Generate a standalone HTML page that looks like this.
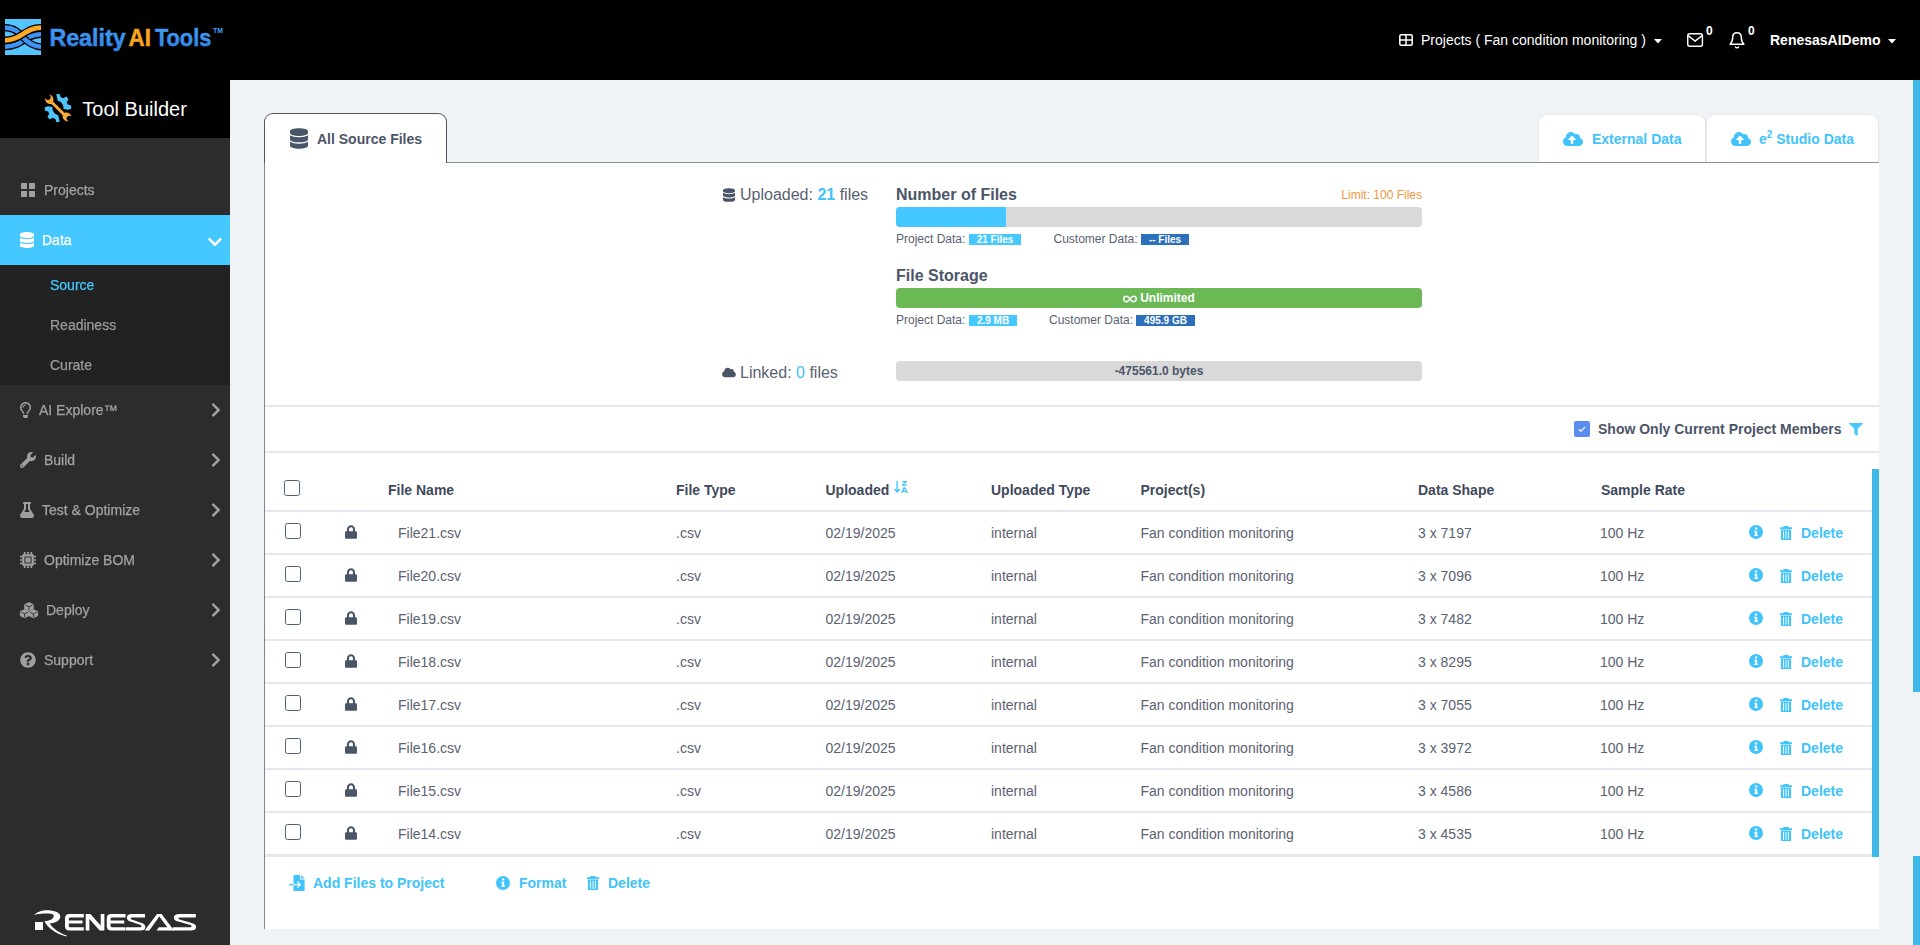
<!DOCTYPE html>
<html lang="en">
<head>
<meta charset="utf-8">
<title>Reality AI Tools - Source Files</title>
<style>
*{box-sizing:border-box;margin:0;padding:0}
html,body{width:1920px;height:945px;overflow:hidden}
body{font-family:"Liberation Sans",sans-serif;font-size:14px;background:#eff3f6;color:#4b5568;position:relative}
.abs{position:absolute}
svg{display:block;overflow:visible}
/* header */
#hdr{position:absolute;left:0;top:0;width:1920px;height:80px;background:#000}
#hdr .t{position:absolute;color:#fff;white-space:nowrap;line-height:16px}
/* sidebar */
#side{position:absolute;left:0;top:80px;width:230px;height:865px;background:#2c2c2c}
#tb{position:absolute;left:0;top:0;width:230px;height:58px;background:#000}
#tb span{position:absolute;left:82.3px;top:16.5px;font-size:20px;line-height:24px;color:#fff;white-space:nowrap}
.mi{position:absolute;left:0;width:230px;height:50px;color:#a3a3a3}
.mi .lbl{-webkit-text-stroke:0.25px currentColor;will-change:transform;position:absolute;top:17px;line-height:16px;font-size:14px;white-space:nowrap}
.mi svg{position:absolute}
.mi.act{background:#45c8ff;color:#fff}
#sub{position:absolute;left:0;top:185px;width:230px;height:120px;background:#222}
#sub div{-webkit-text-stroke:0.25px currentColor;will-change:transform;position:absolute;left:50px;font-size:14px;line-height:16px;color:#9b9b9b}
/* main panel */
#panel{position:absolute;left:264px;top:162px;width:1615px;height:767px;background:#fff;border-left:1px solid #7d8694;border-top:1px solid #8a92a0}
#tab1{z-index:2;position:absolute;left:264px;top:113px;width:183px;height:50px;background:#fff;border:1px solid #51565f;border-bottom:none;border-radius:9px 9px 0 0}
.rtab{position:absolute;top:114px;height:48px;background:#fff;border:1px solid #e3e6ec;border-bottom:none;border-radius:9px 9px 0 0}
.b{font-weight:700}
.tx{position:absolute;white-space:nowrap;line-height:16px}
.lnk{color:#41c3fb;font-weight:700}
.badge{position:absolute;height:11px;line-height:11px;font-size:10px;font-weight:700;color:#fff;text-align:center;white-space:nowrap}
.hl{position:absolute;background:#e4e7ed;height:2px}
.row{position:absolute;left:265px;width:1607px;height:43px;color:#5b6272}
.row .tx{top:13px}
.cb{position:absolute;width:16px;height:16px;border:1px solid #506078;border-radius:2.5px;background:#fff}
</style>
</head>
<body>
<!-- HEADER -->
<div id="hdr">
<svg class="abs" style="left:5px;top:19px" width="36" height="36" viewBox="0 0 36 36">
<defs><clipPath id="lc"><rect x="0" y="0" width="36" height="36"/></clipPath></defs>
<rect width="36" height="36" fill="#55c4fd"/>
<g clip-path="url(#lc)" fill="none" stroke-linecap="butt">
<path d="M-1 27.700C9 27.700 14 24.500 19 21C24.500 17.200 29 15.300 37 15.300" stroke="#000" stroke-width="7.200"/>
<path d="M-1 27.700C9 27.700 14 24.500 19 21C24.500 17.200 29 15.300 37 15.300" stroke="#3d94f2" stroke-width="4.600"/>
<path d="M-1 8.600C9 8.600 13 12.500 18 18.400C23 24 28 27.800 37 27.800" stroke="#000" stroke-width="7.200"/>
<path d="M-1 8.600C9 8.600 13 12.500 18 18.400C23 24 28 27.800 37 27.800" stroke="#3d94f2" stroke-width="4.600"/>
<path d="M-1 21.300C10 21.300 14 17.500 18 15C23 11.800 27 8.700 37 8.700" stroke="#000" stroke-width="7.400"/>
<path d="M-1 21.300C10 21.300 14 17.500 18 15C23 11.800 27 8.700 37 8.700" stroke="#fca829" stroke-width="4.800"/>
</g>
</svg>
<svg class="abs" style="left:46px;top:20px" width="182" height="36" viewBox="0 0 182 36">
<defs><linearGradient id="lg" x1="0" y1="0" x2="0" y2="1"><stop offset="0" stop-color="#45a2f7"/><stop offset="1" stop-color="#2f80e0"/></linearGradient></defs>
<text x="3.400" y="26" font-family="Liberation Sans, sans-serif" font-weight="700" font-size="24.5" fill="url(#lg)" stroke="#3a92ee" stroke-width="0.500" textLength="76.200" lengthAdjust="spacingAndGlyphs">Reality</text>
<text x="82.600" y="26" font-family="Liberation Sans, sans-serif" font-weight="700" font-size="24.5" fill="#fba51f" stroke="#fba51f" stroke-width="0.500" textLength="22.300" lengthAdjust="spacingAndGlyphs">AI</text>
<text x="108.900" y="26" font-family="Liberation Sans, sans-serif" font-weight="700" font-size="24.5" fill="url(#lg)" stroke="#3a92ee" stroke-width="0.500" textLength="56.400" lengthAdjust="spacingAndGlyphs">Tools</text>
<text x="167" y="13" font-family="Liberation Sans, sans-serif" font-weight="700" font-size="7" fill="#45a2f7" textLength="10" lengthAdjust="spacingAndGlyphs">TM</text>
</svg>
<!-- grid icon -->
<svg class="abs" style="left:1399px;top:34px" width="14" height="12" viewBox="0 0 14 12"><rect x="0.800" y="0.800" width="12.400" height="10.400" rx="1.500" fill="none" stroke="#fff" stroke-width="1.500"/><path d="M7 1v10M1 6h12" stroke="#fff" stroke-width="1.500"/></svg>
<div class="t" style="left:1421px;top:32px;font-size:14px">Projects ( Fan condition monitoring )</div>
<svg class="abs" style="left:1654px;top:39px" width="8" height="5" viewBox="0 0 8 5"><path d="M0 0h8L4 4.5z" fill="#fff"/></svg>
<!-- mail -->
<svg class="abs" style="left:1687px;top:33px" width="16.200" height="14" viewBox="0 0 17 14" preserveAspectRatio="none"><rect x="0.8" y="0.8" width="15.4" height="12.4" rx="2" fill="none" stroke="#fff" stroke-width="1.5"/><path d="M1.2 2.6L8.5 8L15.8 2.6" fill="none" stroke="#fff" stroke-width="1.5"/></svg>
<div class="t b" style="left:1706px;top:23px;font-size:12px">0</div>
<!-- bell -->
<svg class="abs" style="left:1729px;top:32px" width="16" height="17" viewBox="0 0 16 17"><path d="M8 0.8C5 0.8 3.7 3.2 3.7 5.6c0 3.2-0.8 5-2.6 6.6h13.8c-1.8-1.6-2.6-3.4-2.6-6.6C12.300 3.200 11 0.800 8 0.800z" fill="none" stroke="#fff" stroke-width="1.5" stroke-linejoin="round"/><path d="M6.2 14.400c0.400 1 1 1.400 1.800 1.400s1.400-0.400 1.800-1.400" fill="none" stroke="#fff" stroke-width="1.4"/></svg>
<div class="t b" style="left:1748px;top:23px;font-size:12px">0</div>
<div class="t b" style="left:1770px;top:32px;font-size:14px">RenesasAIDemo</div>
<svg class="abs" style="left:1888px;top:39px" width="8" height="5" viewBox="0 0 8 5"><path d="M0 0h8L4 4.5z" fill="#fff"/></svg>
</div>
<!-- SIDEBAR -->
<div id="side">
<div id="tb">
<svg class="abs" style="left:43px;top:13px" width="30" height="30" viewBox="0 0 30 30">
<g fill="#4fc3f7">
<path d="M13.200 1.200l3.400-.4 1 3.200 2.600 1.200 3-1.600 2.400 2.600-1.800 2.800 1 2.600 3.400.8v3.400l-3.200 1-4.600-.8c.6-3.600-2-7.400-5.600-8.200z"/>
<path d="M16.800 28.800l-3.400.4-1-3.200-2.600-1.200-3 1.600-2.400-2.600 1.800-2.800-1-2.600-3.400-.8v-3.400l3.200-1 4.600.8c-.6 3.600 2 7.400 5.600 8.200z"/>
</g>
<path fill="#f6a93b" d="M6.600 1.600c2.200.6 3.800 2.600 3.800 5 0 .6-.1 1.200-.3 1.800l11.400 11.400c.6-.2 1.200-.3 1.800-.3 2.400 0 4.400 1.600 5 3.800l-2.300-.6-2.200 1.400-.1 2.600 1.900 1.600c-2.600.5-5.200-1.100-5.900-3.700-.2-.8-.2-1.600 0-2.400L8.400 10.900c-.8.200-1.600.2-2.400 0C3.400 10.200 1.800 7.600 2.300 5l1.600 1.900 2.600-.1 1.400-2.200z"/>
</svg>
<span>Tool Builder</span></div>
<div class="mi" style="top:85px"><svg style="left:21px;top:18px" width="14" height="14" viewBox="0 0 14 14"><path fill="#a0a0a0" d="M0 0h6v6H0zM8 0h6v6H8zM0 8h6v6H0zM8 8h6v6H8z"/></svg><span class="lbl" style="left:44px">Projects</span></div>
<div class="mi act" style="top:135px"><svg style="left:20px;top:17px" width="14" height="16" viewBox="0 0 448 512"><path fill="#fff" d="M448 73.143v45.714C448 159.143 347.667 192 224 192S0 159.143 0 118.857V73.143C0 32.857 100.333 0 224 0s224 32.857 224 73.143zM448 176v102.857C448 319.143 347.667 352 224 352S0 319.143 0 278.857V176c48.125 33.143 136.208 48.572 224 48.572S399.874 209.143 448 176zm0 160v102.857C448 479.143 347.667 512 224 512S0 479.143 0 438.857V336c48.125 33.143 136.208 48.572 224 48.572S399.874 369.143 448 336z"/></svg><span class="lbl" style="left:42px">Data</span><svg style="left:208px;top:19px" width="14" height="16" viewBox="0 0 448 512"><path fill="#fff" d="M207.029 381.476L12.686 187.132c-9.373-9.373-9.373-24.569 0-33.941l22.667-22.667c9.357-9.357 24.522-9.375 33.901-.04L224 284.505l154.745-154.021c9.379-9.335 24.544-9.317 33.901.04l22.667 22.667c9.373 9.373 9.373 24.569 0 33.941L240.971 381.476c-9.373 9.372-24.569 9.372-33.942 0z"/></svg></div>
<div id="sub"><div style="top:12px;color:#45c8ff">Source</div><div style="top:52px">Readiness</div><div style="top:92px">Curate</div></div>
<div class="mi" style="top:305px"><svg style="left:20px;top:17px" width="11" height="16" viewBox="0 0 352 512"><path fill="#a0a0a0" d="M176 80c-52.940 0-96 43.060-96 96 0 8.840 7.160 16 16 16s16-7.160 16-16c0-35.300 28.720-64 64-64 8.840 0 16-7.160 16-16s-7.160-16-16-16zM96.060 459.170c0 3.150.930 6.220 2.680 8.840l24.510 36.840c2.970 4.460 7.970 7.140 13.320 7.140h78.850c5.360 0 10.360-2.680 13.320-7.140l24.510-36.840c1.740-2.620 2.670-5.700 2.680-8.840l.050-43.180H96.020l.040 43.180zM176 0C73.720 0 0 82.970 0 176c0 44.370 16.450 84.850 43.560 115.780 16.640 18.990 42.740 58.800 52.420 92.160v.060h48v-.120c-.010-4.770-.720-9.510-2.150-14.070-5.590-17.810-22.820-64.770-62.170-109.670-20.540-23.430-31.520-53.150-31.610-84.140-.200-73.640 59.670-128 127.950-128 70.580 0 128 57.420 128 128 0 30.970-11.240 60.850-31.650 84.140-39.110 44.610-56.420 91.470-62.100 109.460a47.507 47.507 0 0 0-2.220 14.300v.100h48v-.050c9.680-33.370 35.780-73.180 52.420-92.160C335.550 260.850 352 220.370 352 176 352 78.800 273.200 0 176 0z"/></svg><span class="lbl" style="left:39px">AI Explore™</span><svg style="left:211px;top:17px" width="10" height="16" viewBox="0 0 320 512"><path fill="#a0a0a0" d="M285.476 272.971L91.132 467.314c-9.373 9.373-24.569 9.373-33.941 0l-22.667-22.667c-9.357-9.357-9.375-24.522-.04-33.901L188.505 256 34.484 101.255c-9.335-9.379-9.317-24.544.04-33.901l22.667-22.667c9.373-9.373 24.569-9.373 33.941 0L285.475 239.030c9.373 9.372 9.373 24.568.001 33.941z"/></svg></div>
<div class="mi" style="top:355px"><svg style="left:20px;top:17px" width="16" height="16" viewBox="0 0 512 512"><path fill="#a0a0a0" d="M507.730 109.100c-2.240-9.030-13.540-12.090-20.120-5.510l-74.360 74.360-67.880-11.310-11.310-67.880 74.360-74.360c6.620-6.620 3.430-17.900-5.660-20.160-47.380-11.740-99.550.910-136.580 37.930-39.640 39.640-50.550 97.100-34.050 147.200L18.740 402.760c-24.990 24.990-24.990 65.510 0 90.500 24.990 24.990 65.510 24.990 90.500 0l213.210-213.210c50.120 16.710 107.470 5.680 147.370-34.220 37.070-37.070 49.700-89.320 37.910-136.730zM64 472c-13.250 0-24-10.750-24-24 0-13.260 10.750-24 24-24s24 10.740 24 24c0 13.250-10.750 24-24 24z"/></svg><span class="lbl" style="left:44px">Build</span><svg style="left:211px;top:17px" width="10" height="16" viewBox="0 0 320 512"><path fill="#a0a0a0" d="M285.476 272.971L91.132 467.314c-9.373 9.373-24.569 9.373-33.941 0l-22.667-22.667c-9.357-9.357-9.375-24.522-.04-33.901L188.505 256 34.484 101.255c-9.335-9.379-9.317-24.544.04-33.901l22.667-22.667c9.373-9.373 24.569-9.373 33.941 0L285.475 239.030c9.373 9.372 9.373 24.568.001 33.941z"/></svg></div>
<div class="mi" style="top:405px"><svg style="left:20px;top:17px" width="14" height="16" viewBox="0 0 448 512"><path fill="#a0a0a0" d="M437.200 403.500L320 215V64h8c13.300 0 24-10.700 24-24V24c0-13.300-10.700-24-24-24H120c-13.300 0-24 10.700-24 24v16c0 13.300 10.700 24 24 24h8v151L10.800 403.500C-18.500 450.600 15.300 512 70.900 512h306.200c55.700 0 89.400-61.500 60.100-108.500zM137.900 320l48.200-77.600c3.700-5.200 5.800-11.600 5.800-18.400V64h64v160c0 6.900 2.200 13.200 5.800 18.400l48.200 77.600h-172z"/></svg><span class="lbl" style="left:42px">Test &amp; Optimize</span><svg style="left:211px;top:17px" width="10" height="16" viewBox="0 0 320 512"><path fill="#a0a0a0" d="M285.476 272.971L91.132 467.314c-9.373 9.373-24.569 9.373-33.941 0l-22.667-22.667c-9.357-9.357-9.375-24.522-.04-33.901L188.505 256 34.484 101.255c-9.335-9.379-9.317-24.544.04-33.901l22.667-22.667c9.373-9.373 24.569-9.373 33.941 0L285.475 239.030c9.373 9.372 9.373 24.568.001 33.941z"/></svg></div>
<div class="mi" style="top:455px"><svg style="left:20px;top:17px" width="16" height="16" viewBox="0 0 16 16"><g fill="#a0a0a0"><path fill-rule="evenodd" d="M2.300 2.300h11.400v11.400H2.300zM4.400 4.400v7.200h7.200V4.400z"/><rect x="5.400" y="5.400" width="5.200" height="5.200" fill="#999"/><path d="M3.800 0h1.700v2.500H3.800zM7.150 0h1.700v2.500h-1.700zM10.500 0h1.700v2.500h-1.700zM3.800 13.500h1.700V16H3.800zM7.150 13.500h1.700V16h-1.700zM10.500 13.500h1.700V16h-1.700zM0 3.800h2.500v1.700H0zM0 7.150h2.500v1.700H0zM0 10.500h2.500v1.700H0zM13.500 3.800H16v1.700h-2.500zM13.500 7.150H16v1.700h-2.500zM13.500 10.500H16v1.700h-2.500z"/></g></svg><span class="lbl" style="left:44px">Optimize BOM</span><svg style="left:211px;top:17px" width="10" height="16" viewBox="0 0 320 512"><path fill="#a0a0a0" d="M285.476 272.971L91.132 467.314c-9.373 9.373-24.569 9.373-33.941 0l-22.667-22.667c-9.357-9.357-9.375-24.522-.04-33.901L188.505 256 34.484 101.255c-9.335-9.379-9.317-24.544.04-33.901l22.667-22.667c9.373-9.373 24.569-9.373 33.941 0L285.475 239.030c9.373 9.372 9.373 24.568.001 33.941z"/></svg></div>
<div class="mi" style="top:505px"><svg style="left:20px;top:17px" width="18" height="16" viewBox="0 0 18 16"><path fill="#a0a0a0" stroke="#a0a0a0" stroke-width="0.8" stroke-linejoin="round" d="M9.0 0.6L13.3 2.6L13.3 6.8L9.0 8.8L4.7 6.8L4.7 2.6z"/><path fill="none" stroke="#2c2c2c" stroke-width="0.9" d="M5.5 3.1L9.0 4.8L12.5 3.1M9.0 4.8L9.0 8.2"/><path fill="#a0a0a0" stroke="#a0a0a0" stroke-width="0.8" stroke-linejoin="round" d="M4.6 7.6L8.9 9.6L8.9 13.8L4.6 15.8L0.3 13.8L0.3 9.6z"/><path fill="none" stroke="#2c2c2c" stroke-width="0.9" d="M1.1 10.1L4.6 11.8L8.1 10.1M4.6 11.8L4.6 15.2"/><path fill="#a0a0a0" stroke="#a0a0a0" stroke-width="0.8" stroke-linejoin="round" d="M13.4 7.6L17.7 9.6L17.7 13.8L13.4 15.8L9.1 13.8L9.1 9.6z"/><path fill="none" stroke="#2c2c2c" stroke-width="0.9" d="M9.9 10.1L13.4 11.8L16.9 10.1M13.4 11.8L13.4 15.2"/></svg><span class="lbl" style="left:46px">Deploy</span><svg style="left:211px;top:17px" width="10" height="16" viewBox="0 0 320 512"><path fill="#a0a0a0" d="M285.476 272.971L91.132 467.314c-9.373 9.373-24.569 9.373-33.941 0l-22.667-22.667c-9.357-9.357-9.375-24.522-.04-33.901L188.505 256 34.484 101.255c-9.335-9.379-9.317-24.544.04-33.901l22.667-22.667c9.373-9.373 24.569-9.373 33.941 0L285.475 239.030c9.373 9.372 9.373 24.568.001 33.941z"/></svg></div>
<div class="mi" style="top:555px"><svg style="left:20px;top:17px" width="16" height="16" viewBox="0 0 512 512"><path fill="#a0a0a0" d="M504 256c0 136.997-111.043 248-248 248S8 392.997 8 256C8 119.083 119.043 8 256 8s248 111.083 248 248zM262.655 90c-54.497 0-89.255 22.957-116.549 63.758-3.536 5.286-2.353 12.415 2.715 16.258l34.699 26.310c5.205 3.947 12.621 3.008 16.665-2.122 17.864-22.658 30.113-35.797 57.303-35.797 20.429 0 45.698 13.148 45.698 32.958 0 14.976-12.363 22.667-32.534 33.976C247.128 238.528 216 254.941 216 296v4c0 6.627 5.373 12 12 12h56c6.627 0 12-5.373 12-12v-1.333c0-28.462 83.186-29.647 83.186-106.667 0-58.002-60.165-102-116.531-102zM256 338c-25.365 0-46 20.635-46 46 0 25.364 20.635 46 46 46s46-20.636 46-46c0-25.365-20.635-46-46-46z"/></svg><span class="lbl" style="left:44px">Support</span><svg style="left:211px;top:17px" width="10" height="16" viewBox="0 0 320 512"><path fill="#a0a0a0" d="M285.476 272.971L91.132 467.314c-9.373 9.373-24.569 9.373-33.941 0l-22.667-22.667c-9.357-9.357-9.375-24.522-.04-33.901L188.505 256 34.484 101.255c-9.335-9.379-9.317-24.544.04-33.901l22.667-22.667c9.373-9.373 24.569-9.373 33.941 0L285.475 239.030c9.373 9.372 9.373 24.568.001 33.941z"/></svg></div>
<!-- renesas logo -->
<svg class="abs" style="left:28px;top:820px" width="180" height="45" viewBox="0 0 180 45">
<g fill="#fff">
<rect x="7" y="22" width="8" height="8"/>
<path d="M6.100 15C8.500 12.500 13 10.300 18.750 10.300C26 10.300 32.300 12.500 32.300 16.400C32.300 20.500 27 23 21.600 23.400C24.500 27.500 30 32.500 38.900 35.600L38.300 36.600C28 34 19.500 28 16.400 21.100C21 20.800 25.800 19 25.800 15.900C25.800 14 22.500 13.600 18.750 13.600C13.500 13.600 9 14.200 6.100 15Z"/>
<path d="M41.500 14.100h14.300v3.300H42.600c-1.200 0-1.800.6-1.800 1.700v1.500h13.700v3H40.800v1.800c0 1.200.6 1.800 1.800 1.800h13.200v3.300H41.500c-2.900 0-4.500-1.500-4.500-4.300v-7.800c0-2.800 1.600-4.300 4.500-4.300z"/>
<path d="M57.700 14.100h4.700l10.300 11.500V14.100h3.700v16.400h-4.700L61.400 19v11.500h-3.700z"/>
<path d="M83.250 14.100h14.300v3.300H84.350c-1.200 0-1.800.6-1.800 1.700v1.500h13.700v3H82.550v1.800c0 1.200.6 1.800 1.800 1.800h13.200v3.300H83.250c-2.900 0-4.500-1.500-4.500-4.300v-7.800c0-2.800 1.600-4.300 4.500-4.300z"/>
<path d="M103.500 14.100H117v3.300h-12.600c-1.200 0-1.700.4-1.700 1 0 .6.400 1 1.600 1.400l9.400 3.200c2.600.9 3.600 2.200 3.600 3.900 0 2.200-1.600 3.600-4.600 3.600H98v-3.300h13.800c1.200 0 1.700-.4 1.700-1 0-.6-.4-1-1.600-1.400l-9.400-3.200c-2.600-.9-3.600-2.200-3.600-3.900 0-2.200 1.600-3.600 4.600-3.600z"/>
<path d="M129 14.100h4.600L146 30.500h-17.500l2.400-3.300h8.400l-8-10.600-10 13.900h-4.600z"/>
<g transform="translate(144.800 0) scale(1.21 1) translate(-144.800 0)"><path d="M150.300 14.100h13.500v3.300h-12.600c-1.200 0-1.700.4-1.700 1 0 .6.400 1 1.600 1.400l9.400 3.200c2.600.9 3.600 2.200 3.600 3.900 0 2.200-1.600 3.600-4.600 3.600h-14.700v-3.300h13.800c1.200 0 1.700-.4 1.700-1 0-.6-.4-1-1.600-1.400l-9.400-3.200c-2.600-.9-3.600-2.200-3.600-3.900 0-2.200 1.600-3.600 4.600-3.600z"/></g>
</g>
</svg>
</div>
<!-- MAIN -->
<div id="tab1"></div>
<div class="rtab" style="left:1538px;width:168px"></div>
<div class="rtab" style="left:1706px;width:173px"></div>
<div id="panel"></div>
<div id="content" style="position:absolute;left:0;top:0;z-index:3">
<!-- tab labels -->
<svg class="abs" style="left:290px;top:128px" width="18" height="21" viewBox="0 0 448 512"><path fill="#4b5568" d="M448 73.143v45.714C448 159.143 347.667 192 224 192S0 159.143 0 118.857V73.143C0 32.857 100.333 0 224 0s224 32.857 224 73.143zM448 176v102.857C448 319.143 347.667 352 224 352S0 319.143 0 278.857V176c48.125 33.143 136.208 48.572 224 48.572S399.874 209.143 448 176zm0 160v102.857C448 479.143 347.667 512 224 512S0 479.143 0 438.857V336c48.125 33.143 136.208 48.572 224 48.572S399.874 369.143 448 336z"/></svg>
<div class="tx b" style="left:317px;top:131px;color:#4b5568">All Source Files</div>
<svg class="abs" style="left:1563px;top:131px" width="20" height="16" viewBox="0 0 640 512"><path fill="#41c3fb" d="M537.6 226.6c4.100-10.700 6.400-22.400 6.400-34.600 0-53-43-96-96-96-19.700 0-38.100 6-53.300 16.200C367 64.200 315.300 32 256 32c-88.400 0-160 71.600-160 160 0 2.700.100 5.400.200 8.100C40.200 219.800 0 273.200 0 336c0 79.500 64.500 144 144 144h368c70.700 0 128-57.300 128-128 0-61.900-44-113.600-102.400-125.400zM393.400 288H328v112c0 8.800-7.200 16-16 16h-48c-8.800 0-16-7.200-16-16V288h-65.400c-14.300 0-21.400-17.200-11.300-27.300l105.400-105.400c6.200-6.200 16.400-6.200 22.600 0l105.400 105.400c10.100 10.100 2.900 27.300-11.300 27.300z"/></svg>
<div class="tx lnk" style="left:1592px;top:131px">External Data</div>
<svg class="abs" style="left:1731px;top:131px" width="20" height="16" viewBox="0 0 640 512"><path fill="#41c3fb" d="M537.6 226.6c4.100-10.700 6.400-22.400 6.400-34.600 0-53-43-96-96-96-19.700 0-38.100 6-53.300 16.200C367 64.200 315.300 32 256 32c-88.400 0-160 71.600-160 160 0 2.700.100 5.400.200 8.100C40.200 219.800 0 273.200 0 336c0 79.500 64.500 144 144 144h368c70.700 0 128-57.300 128-128 0-61.900-44-113.600-102.400-125.400zM393.400 288H328v112c0 8.800-7.200 16-16 16h-48c-8.800 0-16-7.200-16-16V288h-65.400c-14.300 0-21.400-17.200-11.300-27.300l105.400-105.400c6.200-6.200 16.400-6.200 22.600 0l105.400 105.400c10.100 10.100 2.900 27.300-11.300 27.300z"/></svg>
<div class="tx lnk" style="left:1759px;top:131px">e<span style="font-size:10px;position:relative;top:-6px;line-height:0">2</span> Studio Data</div>
<!-- stats -->
<svg class="abs" style="left:723px;top:188px" width="12" height="14" viewBox="0 0 448 512"><path fill="#4b5568" d="M448 73.143v45.714C448 159.143 347.667 192 224 192S0 159.143 0 118.857V73.143C0 32.857 100.333 0 224 0s224 32.857 224 73.143zM448 176v102.857C448 319.143 347.667 352 224 352S0 319.143 0 278.857V176c48.125 33.143 136.208 48.572 224 48.572S399.874 209.143 448 176zm0 160v102.857C448 479.143 347.667 512 224 512S0 479.143 0 438.857V336c48.125 33.143 136.208 48.572 224 48.572S399.874 369.143 448 336z"/></svg>
<div class="tx" style="left:740px;top:186px;font-size:16px;line-height:18px;color:#5a6272">Uploaded: <span style="color:#41c3fb;font-weight:700">21</span> files</div>
<div class="tx b" style="left:896px;top:186px;font-size:16px;line-height:18px;color:#4b5568">Number of Files</div>
<div class="tx" style="left:1222px;width:200px;text-align:right;top:188px;font-size:12px;line-height:14px;color:#f5923e">Limit: 100 Files</div>
<div class="abs" style="left:896px;top:207px;width:526px;height:20px;background:#d9d9d9;border-radius:4px;overflow:hidden"><div style="width:110px;height:20px;background:#45c8ff"></div></div>
<div class="tx" style="left:896px;top:232px;font-size:12px;line-height:14px;color:#5a6272">Project Data<span>:</span></div>
<div class="badge" style="left:969px;top:234px;width:52px;background:#45c8ff">21 Files</div>
<div class="tx" style="left:1053.5px;top:232px;font-size:12px;line-height:14px;color:#5a6272">Customer Data<span>:</span></div>
<div class="badge" style="left:1141px;top:234px;width:48px;background:#2c6fbb">-- Files</div>
<div class="tx b" style="left:896px;top:267px;font-size:16px;line-height:18px;color:#4b5568">File Storage</div>
<div class="abs" style="left:896px;top:288px;width:526px;height:20px;background:#6ab955;border-radius:4px;color:#fff;font-size:12px;font-weight:700;line-height:20px;text-align:center"><svg style="display:inline-block;vertical-align:-1px;margin-right:3px" width="14" height="8" viewBox="0 0 14 8"><path d="M7 4C5.800 2.200 4.800 1.200 3.500 1.200a2.800 2.800 0 0 0 0 5.600C4.800 6.800 5.800 5.800 7 4c1.200-1.800 2.200-2.800 3.500-2.800a2.800 2.800 0 0 1 0 5.600C9.200 6.800 8.200 5.800 7 4z" fill="none" stroke="#fff" stroke-width="1.500"/></svg>Unlimited</div>
<div class="tx" style="left:896px;top:313px;font-size:12px;line-height:14px;color:#5a6272">Project Data<span>:</span></div>
<div class="badge" style="left:969px;top:315px;width:48px;background:#45c8ff">2.9 MB</div>
<div class="tx" style="left:1049px;top:313px;font-size:12px;line-height:14px;color:#5a6272">Customer Data<span>:</span></div>
<div class="badge" style="left:1136px;top:315px;width:59px;background:#2c6fbb">495.9 GB</div>
<svg class="abs" style="left:722px;top:367px" width="14" height="11" viewBox="0 0 640 512"><path fill="#4b5568" d="M537.6 226.6c4.100-10.700 6.400-22.400 6.400-34.600 0-53-43-96-96-96-19.700 0-38.100 6-53.300 16.200C367 64.200 315.300 32 256 32c-88.400 0-160 71.600-160 160 0 2.700.100 5.400.200 8.100C40.200 219.800 0 273.200 0 336c0 79.500 64.500 144 144 144h368c70.700 0 128-57.300 128-128 0-61.900-44-113.600-102.400-125.400z"/></svg>
<div class="tx" style="left:740px;top:364px;font-size:16px;line-height:18px;color:#5a6272">Linked: <span style="color:#41c3fb">0</span> files</div>
<div class="abs b" style="left:896px;top:361px;width:526px;height:20px;background:#d9d9d9;border-radius:4px;color:#4b5568;font-size:12px;line-height:20px;text-align:center">-475561.0 bytes</div>
<div class="hl" style="left:265px;top:405px;width:1614px"></div>
<!-- filter row -->
<div class="abs" style="left:1574px;top:421px;width:16px;height:16px;background:#5b8def;border-radius:2px"><svg style="position:absolute;left:4px;top:5px" width="8" height="6" viewBox="0 0 8 6"><path d="M0.800 3.200L3 5.200 7.200 0.800" fill="none" stroke="#fff" stroke-width="1.200"/></svg></div>
<div class="tx b" style="left:1598px;top:421px;color:#4b5568">Show Only Current Project Members</div>
<svg class="abs" style="left:1849px;top:423px" width="14" height="12.500" viewBox="0 0 512 512" preserveAspectRatio="none"><path fill="#45c8ff" d="M487.976 0H24.028C2.710 0-8.047 25.866 7.058 40.971L192 225.941V432c0 7.831 3.821 15.170 10.237 19.662l80 55.980C298.020 518.690 320 507.493 320 487.980V225.941l184.947-184.970C520.021 25.896 509.338 0 487.976 0z"/></svg>
<div class="hl" style="left:265px;top:451px;width:1614px"></div>
<!-- table -->
<div class="cb" style="left:284px;top:480px"></div>
<div class="tx b" style="left:388px;top:482px;color:#3f4a5c">File Name</div>
<div class="tx b" style="left:676px;top:482px;color:#3f4a5c">File Type</div>
<div class="tx b" style="left:825.5px;top:482px;color:#3f4a5c">Uploaded</div>
<div class="tx b" style="left:991px;top:482px;color:#3f4a5c">Uploaded Type</div>
<div class="tx b" style="left:1140.5px;top:482px;color:#3f4a5c">Project(s)</div>
<div class="tx b" style="left:1418px;top:482px;color:#3f4a5c">Data Shape</div>
<div class="tx b" style="left:1601px;top:482px;color:#3f4a5c">Sample Rate</div>
<svg class="abs" style="left:894px;top:481px" width="14" height="13" viewBox="0 0 14 13"><g fill="#41c3fb"><path d="M2.400 0h1.400v9.300l1.700-1.800.9.900L3.100 12 0 8.400l.9-.9 1.500 1.800z"/><path d="M8.100 0h4.800v1L9.900 3.500h3v1.200H7.900v-1l3-2.500H8.100z"/><path d="M9.500 6.200h1.800l2.500 5.800h-1.600l-.4-1.100H9l-.4 1.100H7.100zM10.400 7.800l-.9 2h1.800z"/></g></svg>
<div class="hl" style="left:265px;top:510px;width:1607px"></div>
<div class="row" style="top:512px">
<div class="cb" style="left:20px;top:11px"></div>
<svg class="abs" style="left:80px;top:13px" width="12" height="14" viewBox="0 0 448 512"><path fill="#4b5568" d="M400 224h-24v-72C376 68.200 307.800 0 224 0S72 68.200 72 152v72H48c-26.500 0-48 21.500-48 48v192c0 26.500 21.500 48 48 48h352c26.500 0 48-21.500 48-48V272c0-26.500-21.500-48-48-48zm-104 0H152v-72c0-39.700 32.300-72 72-72s72 32.300 72 72v72z"/></svg>
<div class="tx" style="left:133px">File21.csv</div>
<div class="tx" style="left:411px">.csv</div>
<div class="tx" style="left:560.5px">02/19/2025</div>
<div class="tx" style="left:726px">internal</div>
<div class="tx" style="left:875.5px">Fan condition monitoring</div>
<div class="tx" style="left:1153px">3 x 7197</div>
<div class="tx" style="left:1335px">100 Hz</div>
<svg class="abs" style="left:1484px;top:13px" width="14" height="14" viewBox="0 0 14 14"><circle cx="7" cy="7" r="7" fill="#41c3fb"/><path fill="#fff" d="M6 2.600h2.200v2H6zM5.300 5.800h2.900v3.900h.9v1.400H5.300V9.700h.9V7.200h-.9z"/></svg>
<svg class="abs" style="left:1515px;top:14px" width="12" height="14" viewBox="0 0 12 14"><g fill="#41c3fb"><path d="M3.600 0h4.800l.5 1.200H12v1.700H0V1.200h3.100z"/><path fill-rule="evenodd" d="M.9 3.500h10.200V14H.9zM3.100 4.800v7.900h.95V4.800zM5.500 4.800v7.900h.95V4.800zM7.900 4.800v7.900h.95V4.800z"/></g></svg>
<div class="tx lnk" style="left:1536px">Delete</div>
</div>
<div class="hl" style="left:265px;top:553px;width:1607px"></div>
<div class="row" style="top:555px">
<div class="cb" style="left:20px;top:11px"></div>
<svg class="abs" style="left:80px;top:13px" width="12" height="14" viewBox="0 0 448 512"><path fill="#4b5568" d="M400 224h-24v-72C376 68.200 307.800 0 224 0S72 68.200 72 152v72H48c-26.500 0-48 21.500-48 48v192c0 26.500 21.500 48 48 48h352c26.500 0 48-21.500 48-48V272c0-26.500-21.500-48-48-48zm-104 0H152v-72c0-39.700 32.300-72 72-72s72 32.300 72 72v72z"/></svg>
<div class="tx" style="left:133px">File20.csv</div>
<div class="tx" style="left:411px">.csv</div>
<div class="tx" style="left:560.5px">02/19/2025</div>
<div class="tx" style="left:726px">internal</div>
<div class="tx" style="left:875.5px">Fan condition monitoring</div>
<div class="tx" style="left:1153px">3 x 7096</div>
<div class="tx" style="left:1335px">100 Hz</div>
<svg class="abs" style="left:1484px;top:13px" width="14" height="14" viewBox="0 0 14 14"><circle cx="7" cy="7" r="7" fill="#41c3fb"/><path fill="#fff" d="M6 2.600h2.200v2H6zM5.300 5.800h2.900v3.900h.9v1.400H5.300V9.700h.9V7.200h-.9z"/></svg>
<svg class="abs" style="left:1515px;top:14px" width="12" height="14" viewBox="0 0 12 14"><g fill="#41c3fb"><path d="M3.600 0h4.800l.5 1.200H12v1.700H0V1.200h3.100z"/><path fill-rule="evenodd" d="M.9 3.500h10.200V14H.9zM3.100 4.800v7.900h.95V4.800zM5.500 4.800v7.900h.95V4.800zM7.900 4.800v7.900h.95V4.800z"/></g></svg>
<div class="tx lnk" style="left:1536px">Delete</div>
</div>
<div class="hl" style="left:265px;top:596px;width:1607px"></div>
<div class="row" style="top:598px">
<div class="cb" style="left:20px;top:11px"></div>
<svg class="abs" style="left:80px;top:13px" width="12" height="14" viewBox="0 0 448 512"><path fill="#4b5568" d="M400 224h-24v-72C376 68.200 307.800 0 224 0S72 68.200 72 152v72H48c-26.500 0-48 21.500-48 48v192c0 26.500 21.500 48 48 48h352c26.500 0 48-21.500 48-48V272c0-26.500-21.500-48-48-48zm-104 0H152v-72c0-39.700 32.300-72 72-72s72 32.300 72 72v72z"/></svg>
<div class="tx" style="left:133px">File19.csv</div>
<div class="tx" style="left:411px">.csv</div>
<div class="tx" style="left:560.5px">02/19/2025</div>
<div class="tx" style="left:726px">internal</div>
<div class="tx" style="left:875.5px">Fan condition monitoring</div>
<div class="tx" style="left:1153px">3 x 7482</div>
<div class="tx" style="left:1335px">100 Hz</div>
<svg class="abs" style="left:1484px;top:13px" width="14" height="14" viewBox="0 0 14 14"><circle cx="7" cy="7" r="7" fill="#41c3fb"/><path fill="#fff" d="M6 2.600h2.200v2H6zM5.300 5.800h2.900v3.900h.9v1.400H5.300V9.700h.9V7.200h-.9z"/></svg>
<svg class="abs" style="left:1515px;top:14px" width="12" height="14" viewBox="0 0 12 14"><g fill="#41c3fb"><path d="M3.600 0h4.800l.5 1.200H12v1.700H0V1.200h3.100z"/><path fill-rule="evenodd" d="M.9 3.500h10.200V14H.9zM3.100 4.800v7.900h.95V4.800zM5.500 4.800v7.900h.95V4.800zM7.900 4.800v7.900h.95V4.800z"/></g></svg>
<div class="tx lnk" style="left:1536px">Delete</div>
</div>
<div class="hl" style="left:265px;top:639px;width:1607px"></div>
<div class="row" style="top:641px">
<div class="cb" style="left:20px;top:11px"></div>
<svg class="abs" style="left:80px;top:13px" width="12" height="14" viewBox="0 0 448 512"><path fill="#4b5568" d="M400 224h-24v-72C376 68.200 307.800 0 224 0S72 68.200 72 152v72H48c-26.500 0-48 21.500-48 48v192c0 26.500 21.500 48 48 48h352c26.500 0 48-21.500 48-48V272c0-26.500-21.500-48-48-48zm-104 0H152v-72c0-39.700 32.300-72 72-72s72 32.300 72 72v72z"/></svg>
<div class="tx" style="left:133px">File18.csv</div>
<div class="tx" style="left:411px">.csv</div>
<div class="tx" style="left:560.5px">02/19/2025</div>
<div class="tx" style="left:726px">internal</div>
<div class="tx" style="left:875.5px">Fan condition monitoring</div>
<div class="tx" style="left:1153px">3 x 8295</div>
<div class="tx" style="left:1335px">100 Hz</div>
<svg class="abs" style="left:1484px;top:13px" width="14" height="14" viewBox="0 0 14 14"><circle cx="7" cy="7" r="7" fill="#41c3fb"/><path fill="#fff" d="M6 2.600h2.200v2H6zM5.300 5.800h2.900v3.900h.9v1.400H5.300V9.700h.9V7.200h-.9z"/></svg>
<svg class="abs" style="left:1515px;top:14px" width="12" height="14" viewBox="0 0 12 14"><g fill="#41c3fb"><path d="M3.600 0h4.800l.5 1.200H12v1.700H0V1.200h3.100z"/><path fill-rule="evenodd" d="M.9 3.500h10.200V14H.9zM3.100 4.800v7.900h.95V4.800zM5.500 4.800v7.900h.95V4.800zM7.900 4.800v7.900h.95V4.800z"/></g></svg>
<div class="tx lnk" style="left:1536px">Delete</div>
</div>
<div class="hl" style="left:265px;top:682px;width:1607px"></div>
<div class="row" style="top:684px">
<div class="cb" style="left:20px;top:11px"></div>
<svg class="abs" style="left:80px;top:13px" width="12" height="14" viewBox="0 0 448 512"><path fill="#4b5568" d="M400 224h-24v-72C376 68.200 307.800 0 224 0S72 68.200 72 152v72H48c-26.500 0-48 21.500-48 48v192c0 26.500 21.500 48 48 48h352c26.500 0 48-21.500 48-48V272c0-26.500-21.500-48-48-48zm-104 0H152v-72c0-39.700 32.300-72 72-72s72 32.300 72 72v72z"/></svg>
<div class="tx" style="left:133px">File17.csv</div>
<div class="tx" style="left:411px">.csv</div>
<div class="tx" style="left:560.5px">02/19/2025</div>
<div class="tx" style="left:726px">internal</div>
<div class="tx" style="left:875.5px">Fan condition monitoring</div>
<div class="tx" style="left:1153px">3 x 7055</div>
<div class="tx" style="left:1335px">100 Hz</div>
<svg class="abs" style="left:1484px;top:13px" width="14" height="14" viewBox="0 0 14 14"><circle cx="7" cy="7" r="7" fill="#41c3fb"/><path fill="#fff" d="M6 2.600h2.200v2H6zM5.300 5.800h2.900v3.900h.9v1.400H5.300V9.700h.9V7.200h-.9z"/></svg>
<svg class="abs" style="left:1515px;top:14px" width="12" height="14" viewBox="0 0 12 14"><g fill="#41c3fb"><path d="M3.600 0h4.800l.5 1.200H12v1.700H0V1.200h3.100z"/><path fill-rule="evenodd" d="M.9 3.500h10.200V14H.9zM3.100 4.800v7.900h.95V4.800zM5.500 4.800v7.900h.95V4.800zM7.900 4.800v7.900h.95V4.800z"/></g></svg>
<div class="tx lnk" style="left:1536px">Delete</div>
</div>
<div class="hl" style="left:265px;top:725px;width:1607px"></div>
<div class="row" style="top:727px">
<div class="cb" style="left:20px;top:11px"></div>
<svg class="abs" style="left:80px;top:13px" width="12" height="14" viewBox="0 0 448 512"><path fill="#4b5568" d="M400 224h-24v-72C376 68.200 307.800 0 224 0S72 68.200 72 152v72H48c-26.500 0-48 21.500-48 48v192c0 26.500 21.500 48 48 48h352c26.500 0 48-21.500 48-48V272c0-26.500-21.500-48-48-48zm-104 0H152v-72c0-39.700 32.300-72 72-72s72 32.300 72 72v72z"/></svg>
<div class="tx" style="left:133px">File16.csv</div>
<div class="tx" style="left:411px">.csv</div>
<div class="tx" style="left:560.5px">02/19/2025</div>
<div class="tx" style="left:726px">internal</div>
<div class="tx" style="left:875.5px">Fan condition monitoring</div>
<div class="tx" style="left:1153px">3 x 3972</div>
<div class="tx" style="left:1335px">100 Hz</div>
<svg class="abs" style="left:1484px;top:13px" width="14" height="14" viewBox="0 0 14 14"><circle cx="7" cy="7" r="7" fill="#41c3fb"/><path fill="#fff" d="M6 2.600h2.200v2H6zM5.300 5.800h2.900v3.900h.9v1.400H5.300V9.700h.9V7.200h-.9z"/></svg>
<svg class="abs" style="left:1515px;top:14px" width="12" height="14" viewBox="0 0 12 14"><g fill="#41c3fb"><path d="M3.600 0h4.800l.5 1.200H12v1.700H0V1.200h3.100z"/><path fill-rule="evenodd" d="M.9 3.500h10.200V14H.9zM3.100 4.800v7.900h.95V4.800zM5.500 4.800v7.900h.95V4.800zM7.900 4.800v7.900h.95V4.800z"/></g></svg>
<div class="tx lnk" style="left:1536px">Delete</div>
</div>
<div class="hl" style="left:265px;top:768px;width:1607px"></div>
<div class="row" style="top:770px">
<div class="cb" style="left:20px;top:11px"></div>
<svg class="abs" style="left:80px;top:13px" width="12" height="14" viewBox="0 0 448 512"><path fill="#4b5568" d="M400 224h-24v-72C376 68.200 307.800 0 224 0S72 68.200 72 152v72H48c-26.500 0-48 21.500-48 48v192c0 26.500 21.500 48 48 48h352c26.500 0 48-21.500 48-48V272c0-26.500-21.500-48-48-48zm-104 0H152v-72c0-39.700 32.300-72 72-72s72 32.300 72 72v72z"/></svg>
<div class="tx" style="left:133px">File15.csv</div>
<div class="tx" style="left:411px">.csv</div>
<div class="tx" style="left:560.5px">02/19/2025</div>
<div class="tx" style="left:726px">internal</div>
<div class="tx" style="left:875.5px">Fan condition monitoring</div>
<div class="tx" style="left:1153px">3 x 4586</div>
<div class="tx" style="left:1335px">100 Hz</div>
<svg class="abs" style="left:1484px;top:13px" width="14" height="14" viewBox="0 0 14 14"><circle cx="7" cy="7" r="7" fill="#41c3fb"/><path fill="#fff" d="M6 2.600h2.200v2H6zM5.300 5.800h2.900v3.900h.9v1.400H5.300V9.700h.9V7.200h-.9z"/></svg>
<svg class="abs" style="left:1515px;top:14px" width="12" height="14" viewBox="0 0 12 14"><g fill="#41c3fb"><path d="M3.600 0h4.800l.5 1.200H12v1.700H0V1.200h3.100z"/><path fill-rule="evenodd" d="M.9 3.500h10.200V14H.9zM3.100 4.800v7.900h.95V4.800zM5.500 4.800v7.900h.95V4.800zM7.900 4.800v7.900h.95V4.800z"/></g></svg>
<div class="tx lnk" style="left:1536px">Delete</div>
</div>
<div class="hl" style="left:265px;top:811px;width:1607px"></div>
<div class="row" style="top:813px">
<div class="cb" style="left:20px;top:11px"></div>
<svg class="abs" style="left:80px;top:13px" width="12" height="14" viewBox="0 0 448 512"><path fill="#4b5568" d="M400 224h-24v-72C376 68.200 307.800 0 224 0S72 68.200 72 152v72H48c-26.500 0-48 21.500-48 48v192c0 26.500 21.500 48 48 48h352c26.500 0 48-21.500 48-48V272c0-26.500-21.500-48-48-48zm-104 0H152v-72c0-39.700 32.300-72 72-72s72 32.300 72 72v72z"/></svg>
<div class="tx" style="left:133px">File14.csv</div>
<div class="tx" style="left:411px">.csv</div>
<div class="tx" style="left:560.5px">02/19/2025</div>
<div class="tx" style="left:726px">internal</div>
<div class="tx" style="left:875.5px">Fan condition monitoring</div>
<div class="tx" style="left:1153px">3 x 4535</div>
<div class="tx" style="left:1335px">100 Hz</div>
<svg class="abs" style="left:1484px;top:13px" width="14" height="14" viewBox="0 0 14 14"><circle cx="7" cy="7" r="7" fill="#41c3fb"/><path fill="#fff" d="M6 2.600h2.200v2H6zM5.300 5.800h2.900v3.900h.9v1.400H5.300V9.700h.9V7.200h-.9z"/></svg>
<svg class="abs" style="left:1515px;top:14px" width="12" height="14" viewBox="0 0 12 14"><g fill="#41c3fb"><path d="M3.600 0h4.800l.5 1.200H12v1.700H0V1.200h3.100z"/><path fill-rule="evenodd" d="M.9 3.500h10.200V14H.9zM3.100 4.800v7.900h.95V4.800zM5.500 4.800v7.900h.95V4.800zM7.900 4.800v7.900h.95V4.800z"/></g></svg>
<div class="tx lnk" style="left:1536px">Delete</div>
</div>
<div class="hl" style="left:265px;top:854px;width:1607px;height:3px"></div>
<div class="abs" style="left:1872px;top:469px;width:7px;height:388px;background:#40b8e8"></div>
<div class="abs" style="left:1913px;top:80px;width:7px;height:612px;background:#40b8e8"></div>
<div class="abs" style="left:1913px;top:856px;width:7px;height:89px;background:#40b8e8"></div>
<svg class="abs" style="left:289px;top:875px" width="16" height="16" viewBox="0 0 16 16"><g fill="#41c3fb"><path d="M4.500 0H11v4.600h4.600V16H4.500v-5.700h5.200l-1.700 1.700.9.900L12.200 9.600 8.900 6.300l-.9.900 1.700 1.800H4.500z"/><path d="M12 0l3.600 3.600H12z"/><path d="M0 9h4.500v1.300H0z"/></g></svg>
<div class="tx lnk" style="left:313px;top:875px">Add Files to Project</div>
<svg class="abs" style="left:496px;top:876px" width="14" height="14" viewBox="0 0 14 14"><circle cx="7" cy="7" r="7" fill="#41c3fb"/><path fill="#fff" d="M6 2.600h2.200v2H6zM5.300 5.800h2.900v3.900h.9v1.400H5.300V9.700h.9V7.200h-.9z"/></svg>
<div class="tx lnk" style="left:519px;top:875px">Format</div>
<svg class="abs" style="left:587px;top:876px" width="12" height="14" viewBox="0 0 12 14"><g fill="#41c3fb"><path d="M3.600 0h4.800l.5 1.200H12v1.700H0V1.200h3.100z"/><path fill-rule="evenodd" d="M.9 3.500h10.200V14H.9zM3.100 4.800v7.900h.95V4.800zM5.500 4.800v7.900h.95V4.800zM7.900 4.800v7.900h.95V4.800z"/></g></svg>
<div class="tx lnk" style="left:608px;top:875px">Delete</div>
</div>
</body>
</html>
